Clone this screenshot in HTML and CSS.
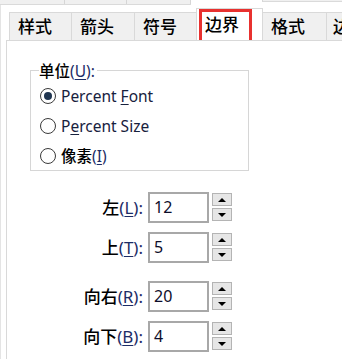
FILE: index.html
```html
<!DOCTYPE html>
<html>
<head>
<meta charset="utf-8">
<link rel="stylesheet" href="styles.css">
</head>
<body>
<div class="page">
  <div class="top-strip">
    <div class="ghost-tabs">
      <div class="ghost g1"></div>
      <div class="ghost g2"></div>
      <div class="ghost g3"></div>
    </div>
    <div class="ghost-right"></div>
  </div>
  <div class="main">
    <div class="tabs">
      <div class="tab w62">样式</div>
      <div class="tab w63">箭头</div>
      <div class="tab w62">符号</div>
      <div class="tab selected">边界<span class="highlight"></span></div>
      <div class="tab w63">格式</div>
      <div class="tab last">边</div>
    </div>
    <div class="panel">
      <fieldset class="group">
        <legend class="legend">单位<span class="mn">(<u>U</u>):</span></legend>
        <div class="radio-row">
          <span class="radio checked"></span><span class="lat">Percent <u>F</u>ont</span>
        </div>
        <div class="radio-row">
          <span class="radio"></span><span class="lat">P<u>e</u>rcent Size</span>
        </div>
        <div class="radio-row">
          <span class="radio"></span><span class="cjk">像素<span class="mn">(<u>I</u>)</span></span>
        </div>
      </fieldset>
      <div class="fields">
        <div class="field">
          <label class="flabel">左<span class="mn">(<u>L</u>):</span></label>
          <div class="input">12</div>
          <div class="spin"><span class="btn"><span class="up"></span></span><span class="btn"><span class="down"></span></span></div>
        </div>
        <div class="field">
          <label class="flabel">上<span class="mn">(<u>T</u>):</span></label>
          <div class="input">5</div>
          <div class="spin"><span class="btn"><span class="up"></span></span><span class="btn"><span class="down"></span></span></div>
        </div>
        <div class="field gap-top">
          <label class="flabel">向右<span class="mn">(<u>R</u>):</span></label>
          <div class="input">20</div>
          <div class="spin"><span class="btn"><span class="up"></span></span><span class="btn"><span class="down"></span></span></div>
        </div>
        <div class="field">
          <label class="flabel">向下<span class="mn">(<u>B</u>):</span></label>
          <div class="input">4</div>
          <div class="spin"><span class="btn"><span class="up"></span></span><span class="btn"><span class="down"></span></span></div>
        </div>
      </div>
    </div>
  </div>
</div>
</body>
</html>
```
FILE: styles.css
```css
html, body {
  margin: 0;
  padding: 0;
  background: #ffffff;
}
body {
  width: 342px;
  height: 359px;
  overflow: hidden;
  font-family: "Noto Sans", "Noto Sans CJK SC", sans-serif;
  color: #111;
}
.page {
  display: flex;
  flex-direction: column;
  height: 359px;
}
.top-strip {
  display: flex;
  height: 5px;
  flex: none;
}
.ghost-tabs {
  display: flex;
  width: 191px;
  height: 4px;
  background: #f0f0f0;
  border-bottom: 1px solid #dadada;
}
.ghost {
  border-right: 1px solid #d6d6d6;
}
.g1 { width: 64px; }
.g2 { width: 62px; }
.g3 { width: 63px; }
.ghost-right {
  margin-left: 71px;
  flex: 1;
  height: 1px;
  background: #f0f0f0;
  border-left: 1px solid #d6d6d6;
  border-bottom: 1px solid #dadada;
}
.main {
  flex: 1;
  border-left: 1px solid #e4e4e4;
  display: flex;
  flex-direction: column;
}
.tabs {
  display: flex;
  align-items: flex-end;
  height: 35px;
  padding-left: 3px;
  margin-left: 5px;
  flex: none;
  overflow: hidden;
}
.tab {
  box-sizing: border-box;
  height: 28px;
  background: #f0f0f0;
  border-left: 1px solid #d9d9d9;
  border-top: 1px solid #d9d9d9;
  font-family: "Noto Sans CJK SC", sans-serif;
  font-weight: 500;
  font-size: 17px;
  line-height: 26px;
  padding-left: 8px;
  color: #000;
  flex: none;
  white-space: nowrap;
}
.w62 { width: 62px; }
.w63 { width: 63px; }
.tab.selected {
  width: 67px;
  height: 33px;
  margin-bottom: -1px;
  background: #ffffff;
  border-right: 1px solid #d9d9d9;
  line-height: 30px;
  position: relative;
  z-index: 1;
}
.tab.selected + .tab {
  border-left: none;
}
.tab.last {
  width: 20px;
  padding-left: 6px;
  overflow: hidden;
}
.highlight {
  position: absolute;
  left: 2px;
  top: 0px;
  width: 53px;
  height: 34px;
  border: 3px solid #e8312f;
  box-sizing: border-box;
}
.panel {
  flex: 1;
  margin-left: 5px;
  border-left: 1px solid #d9d9d9;
  border-top: 1px solid #d9d9d9;
  background: #ffffff;
}
.group {
  margin: 19px 0 0 23px;
  width: 219px;
  box-sizing: border-box;
  border: 1px solid #d6d6d6;
  padding: 0 0 0 9px;
}
.legend {
  font-size: 15.5px;
  line-height: 20px;
  padding: 0 2px 0 0;
  margin-left: -1px;
  font-family: "Noto Sans CJK SC", sans-serif;
  font-weight: 500;
  color: #000;
}
.mn {
  font-family: "Noto Sans", sans-serif;
  font-weight: 400;
  color: #1c2c66;
}
u {
  text-underline-offset: 2px;
  text-decoration-thickness: 1px;
}
.radio-row {
  display: flex;
  align-items: center;
  height: 30px;
  font-size: 15.5px;
  font-family: "Noto Sans", "Noto Sans CJK SC", sans-serif;
  color: #000;
}
.radio-row:last-child {
  height: 29px;
}
.cjk {
  font-family: "Noto Sans CJK SC", sans-serif;
  font-weight: 500;
}
.lat {
  color: #17213d;
}
.radio {
  box-sizing: border-box;
  width: 16px;
  height: 16px;
  border: 1.5px solid #3a3a3a;
  border-radius: 50%;
  margin-right: 5px;
  display: flex;
  align-items: center;
  justify-content: center;
  background: #fff;
}
.radio.checked::after {
  content: "";
  width: 8px;
  height: 8px;
  border-radius: 50%;
  background: #1f3550;
}
.fields {
  margin-top: 20px;
  display: flex;
  flex-direction: column;
  gap: 9px;
}
.field {
  display: grid;
  grid-template-columns: 136px 61px 20px;
  column-gap: 5px;
  align-items: center;
  height: 31px;
}
.field.gap-top {
  margin-top: 9px;
}
.flabel {
  text-align: right;
  font-family: "Noto Sans CJK SC", sans-serif;
  font-weight: 500;
  font-size: 17px;
  color: #000;
  line-height: 31px;
}
.input {
  box-sizing: border-box;
  height: 31px;
  border: 2px solid #a8a8a8;
  padding-left: 4px;
  font-size: 16px;
  line-height: 27px;
  color: #0d0d2a;
  background: #fff;
}
.spin {
  display: flex;
  flex-direction: column;
  gap: 2px;
  margin-left: -2px;
}
.btn {
  box-sizing: border-box;
  width: 20px;
  height: 13px;
  background: #e6e6e6;
  border: 1px solid #b4b4b4;
  display: flex;
  align-items: center;
  justify-content: center;
}
.up {
  width: 0;
  height: 0;
  border-left: 4px solid transparent;
  border-right: 4px solid transparent;
  border-bottom: 4px solid #000;
}
.down {
  width: 0;
  height: 0;
  border-left: 4px solid transparent;
  border-right: 4px solid transparent;
  border-top: 4px solid #000;
}
```
